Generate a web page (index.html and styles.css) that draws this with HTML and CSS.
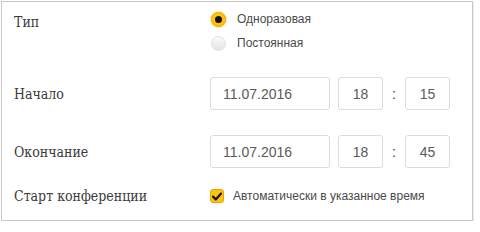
FILE: index.html
```html
<!DOCTYPE html>
<html lang="ru">
<head>
    <meta charset="UTF-8">
    <title>Конференция</title>
    <link rel="stylesheet" href="styles.css">
</head>
<body>
    <div class="panel">
        <div class="row row-type">
            <div class="label">Тип</div>
            <div class="radios">
                <label class="radio checked"><span class="dot"></span>Одноразовая</label>
                <label class="radio"><span class="dot"></span>Постоянная</label>
            </div>
        </div>

        <div class="row row-time">
            <div class="label">Начало</div>
            <div class="fields">
                <div class="field date">11.07.2016</div>
                <div class="field num">18</div>
                <div class="colon">:</div>
                <div class="field num">15</div>
            </div>
        </div>

        <div class="row row-time">
            <div class="label">Окончание</div>
            <div class="fields">
                <div class="field date">11.07.2016</div>
                <div class="field num">18</div>
                <div class="colon">:</div>
                <div class="field num">45</div>
            </div>
        </div>

        <div class="row row-start">
            <div class="label">Старт конференции</div>
            <label class="check">
                <span class="box">
                    <svg width="10" height="9" viewBox="0 0 10 9"><path d="M1 4.6 L3.8 7.4 L9 1.6" fill="none" stroke="#1a1a1a" stroke-width="2.2" stroke-linecap="round" stroke-linejoin="round"/></svg>
                </span>
                Автоматически в указанное время
            </label>
        </div>
    </div>
</body>
</html>
```

FILE: styles.css
```css
/* Reset */
body {
    margin: 0;
    background-color: #fff;
    font-family: "Liberation Sans", Arial, sans-serif;
}

.panel {
    margin: 1px 0 0 1px;
    width: 472px;
    height: 220px;
    border: 1px solid #c9c9c9;
    box-shadow: 1px 1px 0 #ececec;
    box-sizing: border-box;
    padding: 5px 0 0 12px;
}

.row {
    display: flex;
    align-items: center;
}

.label {
    width: 196px;
    flex-shrink: 0;
    font-family: "DejaVu Serif Condensed", "DejaVu Serif", serif;
    font-size: 14px;
    color: #3a3a3a;
}

/* Type radios */
.row-type {
    align-items: flex-start;
}

.row-type .label {
    line-height: 30px;
}

.radios {
    display: flex;
    flex-direction: column;
}

.radio {
    display: flex;
    align-items: center;
    height: 24px;
    font-size: 12px;
    color: #4a4a4a;
}

.dot {
    width: 13px;
    height: 13px;
    border-radius: 50%;
    border: 1px solid #e2e2e2;
    background: linear-gradient(#fafafa, #e4e4e4);
    margin: 0 11px 0 1px;
    box-sizing: content-box;
    position: relative;
}

.radio.checked .dot {
    background: #ffc20e;
    border-color: #f0a800;
    box-shadow: 0 0 2px #f7b500;
}

.radio.checked .dot::after {
    content: "";
    position: absolute;
    left: 3px;
    top: 3px;
    width: 7px;
    height: 7px;
    border-radius: 50%;
    background: #111;
}

/* Date and time fields */
.row-time {
    margin-top: 22px;
}

.row-time + .row-time {
    margin-top: 25px;
}

.fields {
    display: flex;
    align-items: center;
}

.field {
    height: 33px;
    border: 1px solid #dcdcdc;
    border-radius: 3px;
    box-sizing: border-box;
    display: flex;
    align-items: center;
    font-size: 14px;
    color: #5a5a5a;
    background: #fff;
}

.date {
    width: 120px;
    padding-left: 12px;
    margin-right: 8px;
}

.num {
    width: 45px;
    justify-content: center;
}

.colon {
    width: 22px;
    text-align: center;
    font-size: 15px;
    color: #444;
}

/* Auto start */
.row-start {
    margin-top: 18px;
    height: 20px;
}

.check {
    display: flex;
    align-items: center;
    font-size: 12px;
    color: #4a4a4a;
}

.box {
    width: 14px;
    height: 14px;
    border-radius: 3px;
    background: #ffc20e;
    border: 1px solid #e6a600;
    box-sizing: border-box;
    display: flex;
    align-items: center;
    justify-content: center;
    margin-right: 9px;
}
```
